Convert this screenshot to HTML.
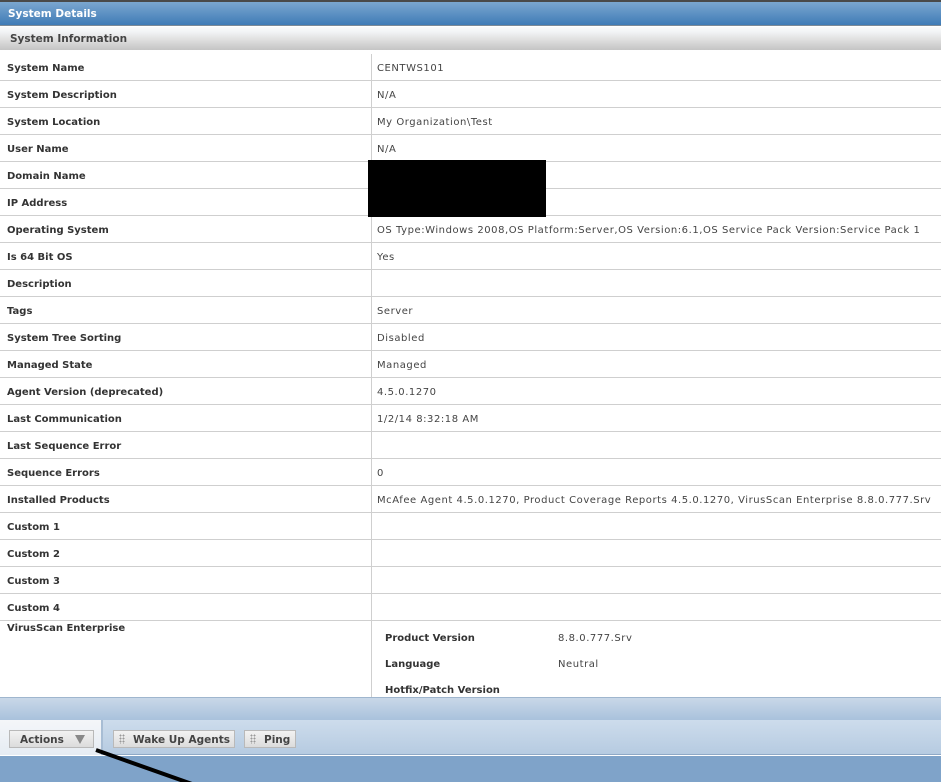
<!DOCTYPE html>
<html><head><meta charset="utf-8">
<style>
*{margin:0;padding:0;box-sizing:border-box}
body{width:941px;height:782px;overflow:hidden;background:#fff;font-family:"DejaVu Sans","Liberation Sans",sans-serif;font-size:10px;color:#333;position:relative}
.top{position:absolute;left:0;top:0;width:941px;height:2px;background:#4a4a4a}
.hdr{position:absolute;left:0;top:2px;width:941px;height:24px;background:linear-gradient(#7ba7d0,#3f7bb6);border-bottom:1px solid #7d8a96;color:#fff;font-weight:bold;font-size:10.5px;padding:6px 0 0 8px}
.sec{position:absolute;left:0;top:27px;width:941px;height:23px;background:linear-gradient(#fbfbfb,#f2f4f6 20%,#e2e2e2 50%,#c4c4c4);color:#444;font-weight:bold;font-size:10.5px;padding:6px 0 0 10px}
.row{position:absolute;left:0;width:941px;height:27px;border-bottom:1px solid #cfcfcf}
.row .l{position:absolute;left:7px;top:9px;font-weight:bold;color:#333}
.row .v{position:absolute;left:377px;top:9px;color:#444;white-space:nowrap;letter-spacing:0.55px}
.div{position:absolute;left:371px;top:54px;width:1px;height:643px;background:#cfcfcf}
.black{position:absolute;left:368px;top:160px;width:178px;height:57px;background:#000}
.sub{position:absolute;font-size:10px}
.val{letter-spacing:0.55px;color:#444}
.band{position:absolute;left:0;top:697px;width:941px;height:23px;background:linear-gradient(#c9d8e8,#a9c2dc);border-top:1px solid #9fb6ce}
.tb{position:absolute;left:0;top:720px;width:941px;height:35px;background:linear-gradient(#cddcec,#b6cbe1);border-bottom:1px solid #8fa9c6}
.tbl{position:absolute;left:0;top:720px;width:103px;height:35px;background:linear-gradient(#f4f6f9,#e6ecf3);border-right:2px solid #a8bdd4}
.btn{position:absolute;top:730px;height:18px;border:1px solid #b9b9b9;background:linear-gradient(#f2f2f2,#dcdcdc);font-weight:bold;color:#444;font-size:10.5px;padding:3px 0 0 0}
.foot{position:absolute;left:0;top:756px;width:941px;height:26px;background:#7fa3c9}
.grip{display:inline-block;width:6px;height:10px;margin:0 8px 0 5px;vertical-align:-1px;background-image:radial-gradient(#999 40%,transparent 45%);background-size:3px 3px}
</style></head><body>
<div class="top"></div>
<div class="hdr">System Details</div>
<div class="sec">System Information</div>

<div class="row" style="top:54px"><span class="l">System Name</span><span class="v">CENTWS101</span></div>
<div class="row" style="top:81px"><span class="l">System Description</span><span class="v">N/A</span></div>
<div class="row" style="top:108px"><span class="l">System Location</span><span class="v">My Organization\Test</span></div>
<div class="row" style="top:135px"><span class="l">User Name</span><span class="v">N/A</span></div>
<div class="row" style="top:162px"><span class="l">Domain Name</span></div>
<div class="row" style="top:189px"><span class="l">IP Address</span></div>
<div class="row" style="top:216px"><span class="l">Operating System</span><span class="v">OS Type:Windows 2008,OS Platform:Server,OS Version:6.1,OS Service Pack Version:Service Pack 1</span></div>
<div class="row" style="top:243px"><span class="l">Is 64 Bit OS</span><span class="v">Yes</span></div>
<div class="row" style="top:270px"><span class="l">Description</span></div>
<div class="row" style="top:297px"><span class="l">Tags</span><span class="v">Server</span></div>
<div class="row" style="top:324px"><span class="l">System Tree Sorting</span><span class="v">Disabled</span></div>
<div class="row" style="top:351px"><span class="l">Managed State</span><span class="v">Managed</span></div>
<div class="row" style="top:378px"><span class="l">Agent Version (deprecated)</span><span class="v">4.5.0.1270</span></div>
<div class="row" style="top:405px"><span class="l">Last Communication</span><span class="v">1/2/14 8:32:18 AM</span></div>
<div class="row" style="top:432px"><span class="l">Last Sequence Error</span></div>
<div class="row" style="top:459px"><span class="l">Sequence Errors</span><span class="v">0</span></div>
<div class="row" style="top:486px"><span class="l">Installed Products</span><span class="v">McAfee Agent 4.5.0.1270, Product Coverage Reports 4.5.0.1270, VirusScan Enterprise 8.8.0.777.Srv</span></div>
<div class="row" style="top:513px"><span class="l">Custom 1</span></div>
<div class="row" style="top:540px"><span class="l">Custom 2</span></div>
<div class="row" style="top:567px"><span class="l">Custom 3</span></div>
<div class="row" style="top:594px"><span class="l">Custom 4</span></div>
<div class="sub" style="left:7px;top:623px;font-weight:bold">VirusScan Enterprise</div>
<div class="div"></div>
<div class="black"></div>
<div class="sub" style="left:385px;top:633px;font-weight:bold">Product Version</div>
<div class="sub val" style="left:558px;top:633px">8.8.0.777.Srv</div>
<div class="sub" style="left:385px;top:659px;font-weight:bold">Language</div>
<div class="sub val" style="left:558px;top:659px">Neutral</div>
<div class="sub" style="left:385px;top:685px;font-weight:bold">Hotfix/Patch Version</div>

<div class="band"></div>
<div class="tb"></div>
<div class="tbl"></div>
<div class="btn" style="left:9px;width:85px;padding-left:10px">Actions<span style="position:absolute;left:65px;top:4px;width:0;height:0;border-left:5px solid transparent;border-right:5px solid transparent;border-top:9px solid #888"></span></div>
<div class="btn" style="left:113px;width:122px"><span class="grip"></span>Wake Up Agents</div>
<div class="btn" style="left:244px;width:52px"><span class="grip"></span>Ping</div>
<div class="foot"></div>
<svg style="position:absolute;left:0;top:0" width="941" height="782"><line x1="96" y1="750" x2="192" y2="784" stroke="#000" stroke-width="4"/></svg>
</body></html>
